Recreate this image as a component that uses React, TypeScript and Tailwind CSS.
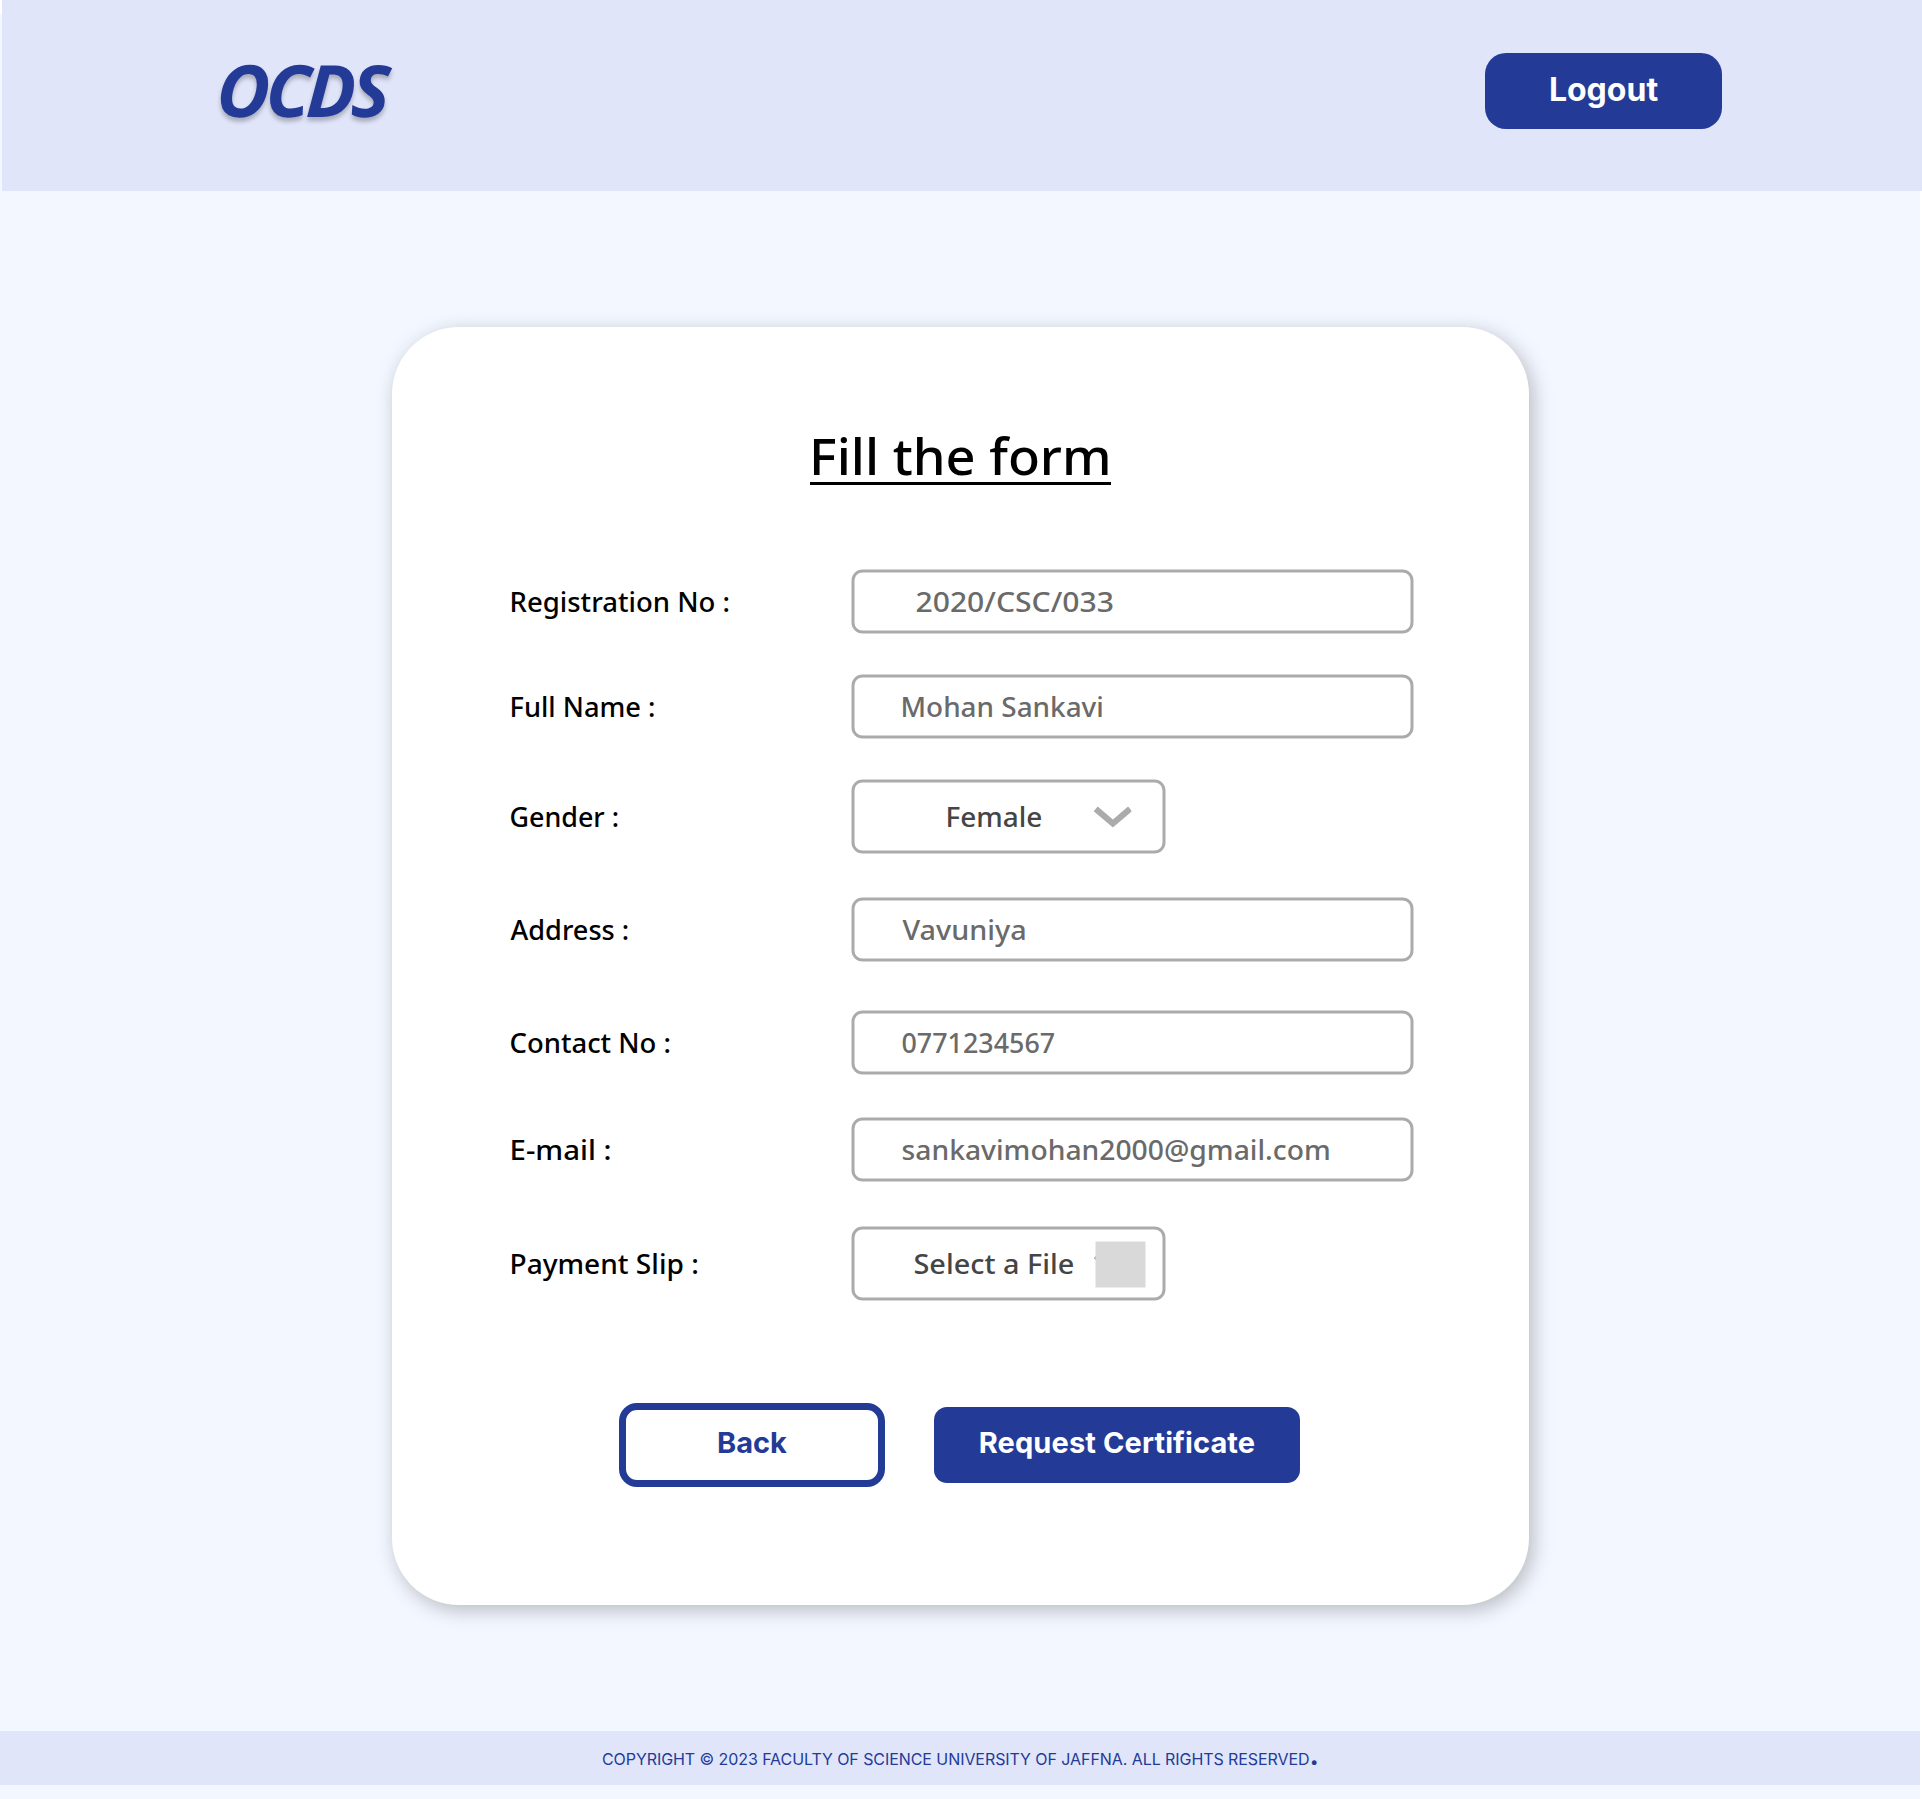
import type { ReactNode } from "react";

function Chevron() {
  return (
    <svg className="mt-[1px] h-[21px] w-[38px] shrink-0" viewBox="0 0 38 21" fill="none">
      <path d="M2.2 2.4 19.4 17 36.6 2.4" stroke="#ababab" strokeWidth="6.2" />
    </svg>
  );
}

function Row({
  label,
  labelClass,
  className,
  children,
}: {
  label: string;
  labelClass: string;
  className: string;
  children: ReactNode;
}) {
  return (
    <div className={`flex items-center ${className}`}>
      <label className="flex w-[343px] shrink-0 text-black">
        <span className={`origin-left whitespace-nowrap ${labelClass}`}>{label}</span>
      </label>
      {children}
    </div>
  );
}

function TextBox({ value, className }: { value: string; className: string }) {
  return (
    <div className="flex h-[64px] w-[561.5px] items-center rounded-[11px] border-[3px] border-[#ababab] text-[#6a6a6a]">
      <span className={`origin-left whitespace-nowrap ${className}`}>{value}</span>
    </div>
  );
}

function PickBox({ value, className, children }: { value: string; className: string; children: ReactNode }) {
  return (
    <div className="relative flex h-[74px] w-[314px] items-center justify-between rounded-[11px] border-[3px] border-[#ababab] pr-[31px] text-[#454545]">
      <span className={`origin-left whitespace-nowrap ${className}`}>{value}</span>
      {children}
    </div>
  );
}

export default function App() {
  return (
    <div className="flex h-[1799px] w-[1922px] flex-col overflow-hidden bg-white pt-[14px]">
      <div className="flex h-[1785px] w-[1920px] flex-col bg-[#f3f7ff] font-['Inter',sans-serif]">
        <header className="-mt-[14px] ml-[2px] flex h-[191px] w-[1920px] shrink-0 items-start justify-between bg-[#e1e5fa] pr-[200px] pl-[215px]">
          <div className="mt-[49px] origin-left scale-x-[1.01] -skew-x-3 font-['Noto_Sans',sans-serif] text-[72px] leading-[80px] font-bold tracking-[-4px] text-[#233b97] italic [text-shadow:0_4px_4px_rgba(0,0,0,0.25)]">
            OCDS
          </div>
          <button className="mt-[53px] flex h-[76px] w-[237px] items-center justify-center rounded-[21px] bg-[#233b97] pb-[3px] text-[32px] font-bold text-white">
            Logout
          </button>
        </header>

        <main className="mt-[136px] ml-[392px] flex h-[1278px] w-[1137px] shrink-0 flex-col rounded-[67px] bg-white pt-[79px] shadow-[4px_5px_20px_rgba(0,0,0,0.25)]">
          <h1 className="ml-[418px] flex h-[79px] w-[301px] border-b-[3px] border-black pt-[20px] font-['Noto_Sans',sans-serif] text-[50px] leading-[60px] font-medium whitespace-nowrap text-black">
            <span className="-ml-[1px] origin-left scale-x-[1.047]">Fill the form</span>
          </h1>

          <form className="mt-[84px] ml-[116px] flex translate-x-[0.5px] translate-y-[0.5px] flex-col font-['Noto_Sans',sans-serif] text-[27.13px] font-medium">
            <Row label="Registration No :" labelClass="ml-[0.5px] scale-x-[1.015]" className="h-[64px]">
              <TextBox value="2020/CSC/033" className="ml-[61px] scale-x-[1.109]" />
            </Row>
            <Row label="Full Name :" labelClass="ml-[0.5px] scale-x-[1.005]" className="mt-[41px] h-[64px]">
              <TextBox value="Mohan Sankavi" className="ml-[46px] scale-x-[1.028]" />
            </Row>
            <Row label="Gender :" labelClass="ml-[1px] scale-x-[0.99]" className="mt-[41px] h-[74px]">
              <PickBox value="Female" className="ml-[90.5px] scale-x-[1.03]">
                <Chevron />
              </PickBox>
            </Row>
            <Row label="Address :" labelClass="ml-[2px]" className="mt-[44px] h-[64px]">
              <TextBox value="Vavuniya" className="ml-[48px] scale-x-[1.06]" />
            </Row>
            <Row label="Contact No :" labelClass="ml-[1px] scale-x-[1.012]" className="mt-[49px] h-[64px]">
              <TextBox value="0771234567" className="ml-[46.5px] scale-x-[0.99]" />
            </Row>
            <Row label="E-mail :" labelClass="ml-[0.5px] scale-x-[1.085]" className="mt-[43px] h-[64px]">
              <TextBox value="sankavimohan2000@gmail.com" className="ml-[46.5px] scale-x-[1.042]" />
            </Row>
            <Row label="Payment Slip :" labelClass="ml-[0.5px] scale-x-[1.035]" className="mt-[45px] h-[74px]">
              <PickBox value="Select a File" className="ml-[58.5px] scale-x-[1.063]">
                <Chevron />
                <span className="absolute top-[11.5px] right-[17.5px] h-[46.5px] w-[49.5px] bg-[#d9d9d9]" />
              </PickBox>
            </Row>
          </form>

          <div className="mt-[103px] ml-[227px] flex items-center gap-[49px] text-[29px] font-bold">
            <button className="flex h-[84px] w-[266px] items-center justify-center rounded-[18px] border-[7px] border-[#233b97] bg-white pb-[5px] text-[#233b97]">
              Back
            </button>
            <button className="flex h-[76px] w-[366px] items-center justify-center rounded-[13px] bg-[#233b97] pb-[5px] tracking-[0.11px] text-white">
              Request Certificate
            </button>
          </div>
        </main>

        <footer className="mt-[126px] flex h-[54px] w-[1920px] shrink-0 items-center bg-[#e1e5fa] pb-[2px] pl-[602px] text-[#233b97]">
          <p className="flex items-baseline text-[16px] leading-[20px] tracking-[-0.07px] whitespace-nowrap">
            COPYRIGHT © 2023 FACULTY OF SCIENCE UNIVERSITY OF JAFFNA. ALL RIGHTS RESERVED
            <span className="text-[28px] leading-[20px] font-bold">.</span>
          </p>
        </footer>
      </div>
    </div>
  );
}
